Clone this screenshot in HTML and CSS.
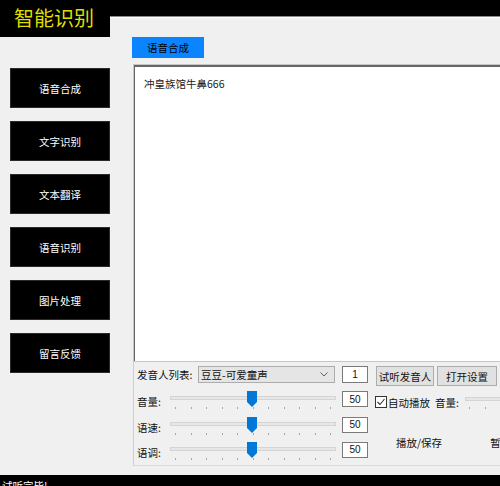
FILE: index.html
```html
<!DOCTYPE html>
<html lang="zh">
<head>
<meta charset="utf-8">
<link rel="stylesheet" href="styles.css">
</head>
<body>
<div class="main">
  <div class="left">
    <div class="brand">智能识别</div>
    <nav class="nav">
      <div class="nav-btn">语音合成</div>
      <div class="nav-btn">文字识别</div>
      <div class="nav-btn">文本翻译</div>
      <div class="nav-btn">语音识别</div>
      <div class="nav-btn">图片处理</div>
      <div class="nav-btn">留言反馈</div>
    </nav>
  </div>
  <div class="right">
    <div class="topstrip"></div>
    <div class="panel">
      <div class="tab">语音合成</div>
      <div class="editor">冲皇族馆牛鼻666</div>
      <div class="controls">
        <div class="params">
          <div class="voice-row">
            <span class="lbl">发音人列表:</span>
            <div class="select">
              <span>豆豆-可爱童声</span>
              <svg class="chev" width="8" height="5" viewBox="0 0 8 5"><polyline points="0.5,0.5 4,4 7.5,0.5" fill="none" stroke="#606060" stroke-width="1"/></svg>
            </div>
          </div>
          <div class="num">1</div>

          <span class="lbl row-lbl">音量:</span>
          <div class="slider">
            <div class="track"></div>
            <div class="ticks"><i></i><i></i><i></i><i></i><i></i><i></i><i></i><i></i><i></i><i></i><i></i></div>
            <svg class="thumb" width="10" height="16" viewBox="0 0 10 16"><path d="M0 0H10V11L5 16L0 11Z" fill="#0078d7"/></svg>
          </div>
          <div class="num small">50</div>

          <span class="lbl row-lbl">语速:</span>
          <div class="slider">
            <div class="track"></div>
            <div class="ticks"><i></i><i></i><i></i><i></i><i></i><i></i><i></i><i></i><i></i><i></i><i></i></div>
            <svg class="thumb" width="10" height="16" viewBox="0 0 10 16"><path d="M0 0H10V11L5 16L0 11Z" fill="#0078d7"/></svg>
          </div>
          <div class="num small">50</div>

          <span class="lbl row-lbl">语调:</span>
          <div class="slider">
            <div class="track"></div>
            <div class="ticks"><i></i><i></i><i></i><i></i><i></i><i></i><i></i><i></i><i></i><i></i><i></i></div>
            <svg class="thumb" width="10" height="16" viewBox="0 0 10 16"><path d="M0 0H10V11L5 16L0 11Z" fill="#0078d7"/></svg>
          </div>
          <div class="num small">50</div>
        </div>
        <div class="actions">
          <div class="btn-row">
            <div class="btn b1">试听发音人</div>
            <div class="btn b2">打开设置</div>
          </div>
          <div class="check-row">
            <svg class="cb" width="12" height="12" viewBox="0 0 12 12"><rect x="0.5" y="0.5" width="11" height="11" fill="#fff" stroke="#333"/><polyline points="2.5,6 5,8.5 9.5,3" fill="none" stroke="#333" stroke-width="1.1"/></svg>
            <span>自动播放</span>
            <span class="vol">音量:</span>
            <div class="mini">
              <div class="track"></div>
              <div class="ticks"><i></i><i></i></div>
            </div>
          </div>
          <div class="play-row">
            <span class="play">播放/保存</span>
            <span class="pause">暂停</span>
          </div>
        </div>
      </div>
    </div>
  </div>
</div>
<div class="status">试听完毕!</div>
</body>
</html>
```

FILE: styles.css
```css
html, body {
  margin: 0;
  padding: 0;
}
body {
  width: 500px;
  height: 486px;
  overflow: hidden;
  background: #f0f0f0;
  font-family: "Noto Sans CJK SC", "Noto Sans", sans-serif;
  font-size: 10.5px;
  color: #111;
}
.main {
  display: flex;
  height: 475px;
  overflow: hidden;
}
.left {
  width: 110px;
  flex: none;
}
.brand {
  height: 37px;
  background: #000;
  color: #dede00;
  font-size: 20px;
  line-height: 35px;
  padding-left: 14px;
  box-sizing: border-box;
}
.nav {
  display: flex;
  flex-direction: column;
  gap: 13px;
  padding: 31px 0 0 10px;
}
.nav-btn {
  width: 100px;
  height: 40px;
  background: #000;
  color: #fff;
  display: flex;
  align-items: center;
  justify-content: center;
  box-sizing: border-box;
  border: 1px solid #2a2a2a;
}
.right {
  flex: 1;
  min-width: 0;
  overflow: hidden;
}
.topstrip {
  height: 16px;
  background: #000;
  border-bottom: 1px solid #8a8a8a;
  box-shadow: 0 1px 0 #fbfbfb;
}
.panel {
  padding-top: 20px;
}
.tab {
  margin-left: 22px;
  width: 72px;
  height: 21px;
  background: #0a84ff;
  color: #000;
  display: flex;
  align-items: center;
  justify-content: center;
}
.editor {
  margin: 6px 0 0 23px;
  width: 400px;
  height: 298px;
  box-sizing: border-box;
  background: #fff;
  border: 1px solid #c6c6c6;
  box-shadow: inset 1px 2px 0 #666;
  padding: 11px 0 0 10px;
  color: #222;
}
.controls {
  margin-left: 23px;
  width: 420px;
  height: 104px;
  box-sizing: border-box;
  border-left: 1px solid #cfcfcf;
  border-bottom: 1px solid #dcdcdc;
  display: flex;
  padding-top: 4px;
}
.params {
  display: grid;
  grid-template-columns: 27px 166px 26px;
  grid-template-rows: 20px 26px 25px 25px;
  column-gap: 6px;
  padding-left: 3px;
  flex: none;
}
.voice-row {
  grid-column: 1 / 3;
  display: flex;
  align-items: flex-start;
}
.voice-row .lbl {
  width: 61px;
  flex: none;
  line-height: 18px;
  white-space: nowrap;
}
.select {
  width: 137px;
  height: 17px;
  box-sizing: border-box;
  background: #e5e5e5;
  border: 1px solid #acacac;
  display: flex;
  align-items: center;
  justify-content: space-between;
  padding: 0 6px 0 2px;
}
.num {
  width: 26px;
  height: 17px;
  box-sizing: border-box;
  background: #fff;
  border: 1px solid #7a7a7a;
  display: flex;
  align-items: center;
  justify-content: center;
  font-family: "Liberation Sans", sans-serif;
  font-size: 10px;
}
.num.small {
  height: 16px;
  align-self: center;
}
.row-lbl {
  align-self: center;
  padding-top: 5px;
  white-space: nowrap;
}
.slider {
  position: relative;
  height: 25px;
}
.slider .track {
  margin-top: 10px;
  height: 2px;
  background: #e7e7e7;
  border: 1px solid #d4d4d4;
}
.ticks {
  display: flex;
  justify-content: space-between;
  padding: 0 5px;
  margin-top: 7px;
}
.ticks i {
  width: 1px;
  height: 2px;
  background: #a8a8a8;
}
.thumb {
  position: absolute;
  left: 77px;
  top: 5px;
}
.actions {
  padding-left: 8px;
  flex: 1;
}
.btn-row {
  display: flex;
  gap: 3px;
}
.btn {
  height: 20px;
  box-sizing: border-box;
  background: #e1e1e1;
  border: 1px solid #adadad;
  display: flex;
  align-items: center;
  justify-content: center;
  white-space: nowrap;
}
.b1 { width: 58px; }
.b2 { width: 60px; }
.check-row {
  display: flex;
  align-items: center;
  margin-top: 9px;
  height: 14px;
  margin-left: -1px;
  white-space: nowrap;
}
.cb {
  margin-right: 1px;
  flex: none;
}
.vol {
  margin-left: 5px;
}
.mini {
  width: 60px;
  flex: none;
  margin-left: 6px;
  padding-top: 1px;
}
.mini .track {
  height: 2px;
  background: #e7e7e7;
  border: 1px solid #d4d4d4;
}
.mini .ticks {
  justify-content: flex-start;
  gap: 15px;
  padding: 0 0 0 4px;
  margin-top: 6px;
}
.play-row {
  display: flex;
  margin-top: 26px;
  white-space: nowrap;
}
.play {
  margin-left: 20px;
}
.pause {
  margin-left: 48px;
}
.status {
  height: 24px;
  background: #000;
  color: #fff;
  padding: 3px 0 0 2px;
  box-sizing: border-box;
}
```
